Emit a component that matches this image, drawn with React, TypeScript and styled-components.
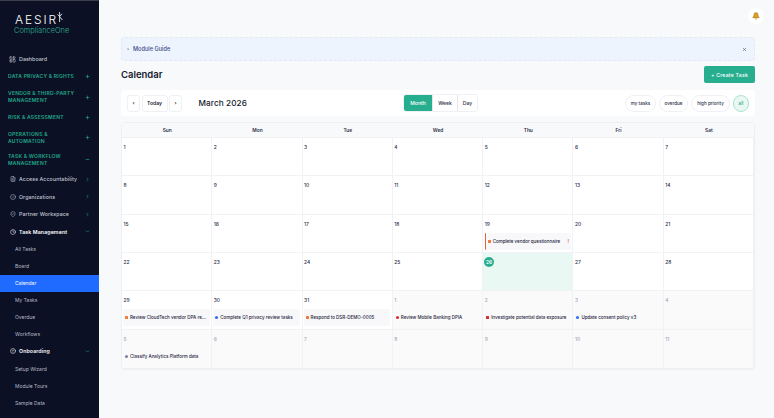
import React from "react";
import styled, { createGlobalStyle } from "styled-components";
import { LayoutDashboard, FileText, CircleCheck, ShieldCheck, Clock, CircleHelp, ChevronRight, ChevronDown, Plus, Minus, X, Bell } from "lucide-react";

const Global = createGlobalStyle`
  html, body { margin: 0; padding: 0; height: 100%; background: #f8f9fb; }
  body { font-family: Inter, "Liberation Sans", sans-serif; color: #1a1f36; overflow: hidden; }
  * { box-sizing: border-box; }
`;
const Shell = styled.div`display: flex; width: 774px; height: 418px; overflow: hidden;`;
const Sidebar = styled.nav`width: 99px; flex: none; height: 418px; overflow: hidden; background: #0b1024; border-top: 1px solid #3b3f4c; display: flex; flex-direction: column;`;
const LogoBox = styled.div`height: 49.5px; padding: 12px 0 0 15px; flex: none;`;
const LogoWord = styled.div`color: #fff; font-size: 12px; line-height: 13px; letter-spacing: 1.9px; font-weight: 300; display: flex; align-items: flex-start;`;
const LogoSub = styled.div`color: #2cb392; font-size: 7.4px; line-height: 9px; margin-left: -1px; font-weight: 300;`;
const Rune = styled.svg`width: 6px; height: 11px; margin-left: -1px; margin-top: -1px;`;
const TopItem = styled.div`height: 17px; display: flex; align-items: center; gap: 3px; padding-left: 9px; color: #c2c7d2; font-size: 5.4px; font-weight: 500; flex: none; svg { width: 7px; height: 7px; }`;
const Group = styled.div<{ $tall?: boolean }>`display: flex; align-items: center; justify-content: space-between; height: ${p => (p.$tall ? 22 : 18.5)}px; padding: 0 9px 0 8px; color: #20a98a; font-size: 5px; line-height: 7px; font-weight: 600; letter-spacing: 0.25px; flex: none; text-transform: uppercase; span { width: 70px; } svg { width: 5px; height: 5px; flex: none; stroke-width: 3; }`;
const NavItem = styled.div<{ $open?: boolean }>`height: 17.5px; display: flex; align-items: center; padding: 0 9px 0 10px; gap: 3px; color: ${p => (p.$open ? "#fff" : "#c2c7d2")}; font-size: 5.25px; font-weight: ${p => (p.$open ? 600 : 500)}; flex: none; letter-spacing: 0.1px; span { flex: 1; white-space: nowrap; }`;
const NavIcon = styled.i`display: flex; svg { width: 6px; height: 6px; }`;
const Chevron = styled.i`display: flex; color: #20a98a; svg { width: 5px; height: 5px; stroke-width: 3; }`;
const SubItem = styled.div<{ $active?: boolean }>`height: 17px; display: flex; align-items: center; padding-left: 15px; flex: none; font-size: 5px; color: ${p => (p.$active ? "#fff" : "#b4b9c6")}; background: ${p => (p.$active ? "#1f6bff" : "transparent")};`;

const Main = styled.main`flex: 1; padding: 8px 19px 0 22px; display: flex; flex-direction: column; min-width: 0;`;
const TopBar = styled.div`height: 29px; display: flex; justify-content: flex-end; flex: none;`;
const BellBtn = styled.div`width: 16px; height: 16px; margin-right: -9px; border-radius: 50%; background: #fff; display: flex; align-items: center; justify-content: center; svg { width: 8px; height: 8px; color: #a8760f; fill: #dfa021; }`;
const Guide = styled.div`height: 24px; flex: none; border: 1px dashed #e2e9f6; border-radius: 4px; background: #eef4fe; display: flex; align-items: center; padding: 0 7px 0 5px; color: #3b4a86; font-size: 5.6px; font-weight: 500; gap: 4px; span { flex: 1; } svg { width: 5px; height: 5px; color: #5b6478; stroke-width: 3; }`;
const Dot = styled.i`font-style: normal; font-size: 5px; color: #5b6aa0;`;
const TitleRow = styled.div`display: flex; justify-content: space-between; align-items: center; height: 17px; margin-top: 5px; flex: none;`;
const Title = styled.h1`margin: 0; font-size: 9.5px; font-weight: 600; color: #141a2e;`;
const CreateBtn = styled.button`width: 51px; height: 17px; border: 0; border-radius: 2px; background: #27ae8e; color: #fff; font: 500 5.2px Inter, sans-serif; letter-spacing: 0.2px; padding: 0;`;
const Toolbar = styled.div`height: 26px; margin-top: 7px; flex: none; background: #fff; border-radius: 4px; display: flex; align-items: center; justify-content: space-between; padding: 0 6px; position: relative;`;
const Nav = styled.div`display: flex; align-items: center; gap: 1.5px;`;
const Small = styled.div<{ $w: number }>`width: ${p => p.$w}px; height: 17px; border: 1px solid #eef0f4; border-radius: 3px; display: flex; align-items: center; justify-content: center; font-size: 5.1px; font-weight: 600; color: #1a1f36;`;
const Month = styled.div`font-size: 8.2px; font-weight: 500; margin-left: 15px; color: #141a2e; letter-spacing: 0.1px;`;
const Views = styled.div`position: absolute; left: 282px; top: 4px; height: 18px; display: flex; border: 1px solid #eef0f4; border-radius: 3px; overflow: hidden;`;
const ViewBtn = styled.div<{ $on?: boolean; $w: number }>`width: ${p => p.$w}px; display: flex; align-items: center; justify-content: center; font-size: 5.1px; font-weight: 500; background: ${p => (p.$on ? "#27ae8e" : "#fff")}; color: ${p => (p.$on ? "#fff" : "#2a3048")}; & + & { border-left: 1px solid #e4e6ee; }`;
const Chips = styled.div`display: flex; gap: 3px;`;
const Chip = styled.div<{ $on?: boolean; $w: number }>`width: ${p => p.$w}px; height: 17px; border-radius: 9px; border: 1px solid ${p => (p.$on ? "#a9e3d3" : "#eef0f4")}; background: ${p => (p.$on ? "#e9f8f3" : "#fff")}; color: ${p => (p.$on ? "#27ae8e" : "#2a3048")}; font-size: 4.6px; font-weight: 500; display: flex; align-items: center; justify-content: center;`;

const Cal = styled.div`margin-top: 6px; height: 247px; flex: none; border: 1px solid #eef0f3; border-radius: 4px; overflow: hidden; background: #fff; display: grid; grid-template-columns: repeat(7, 1fr); grid-template-rows: 15px repeat(6, 1fr); box-shadow: 0 1px 1px rgba(20,30,50,.04);`;
const Head = styled.div`background: #f8f9fb; border-bottom: 1px solid #eef0f3; display: flex; align-items: center; justify-content: center; font-size: 4.8px; font-weight: 600; color: #2a3048;`;
const Cell = styled.div<{ $out?: boolean; $today?: boolean; $last?: boolean }>`min-width: 0; padding: 6px 1.5px 0 1px; border-right: 1px solid #f1f2f5; border-bottom: ${p => (p.$last ? 0 : "1px solid #f1f2f5")}; background: ${p => (p.$today ? "#e9f8f3" : p.$out ? "#fafafb" : "#fff")};`;
const Num = styled.div<{ $out?: boolean }>`font-size: 4.9px; line-height: 6px; font-weight: 500; padding-left: 0.5px; color: ${p => (p.$out ? "#a4a9b5" : "#2a3048")};`;
const TodayNum = styled.div`width: 10px; height: 10px; margin-top: -2px; margin-bottom: -2px; border-radius: 50%; background: #27ae8e; color: #fff; font-size: 4.8px; font-weight: 600; display: flex; align-items: center; justify-content: center;`;
const Event = styled.div<{ $bar?: boolean; $plain?: boolean }>`height: 17px; margin-top: 6px; margin-left: ${p => (p.$bar ? 0.5 : 0)}px; background: ${p => (p.$plain ? "transparent" : "#f8f8fa")}; border-left: ${p => (p.$bar ? "1px solid #e0653a" : "0")}; border-radius: 1px; display: flex; align-items: center; gap: 2px; padding: 0 2px 0 2px; font-size: 4.5px; font-weight: 500; color: #1f2540; white-space: nowrap; overflow: hidden; span { flex: 1; min-width: 0; }`;
const Mark = styled.i<{ $c: string; $round?: boolean }>`width: 3px; height: 3px; flex: none; background: ${p => p.$c}; border-radius: ${p => (p.$round ? "50%" : "0.5px")};`;
const Flag = styled.b`color: #e0653a; font-size: 4.8px; font-weight: 600;`;

type Ev = { t: string; c: string; round?: boolean; bar?: boolean; flag?: boolean; plain?: boolean };
const events: Record<number, Ev> = {
  18: { t: "Complete vendor questionnaire", c: "#f07a3e", bar: true, flag: true },
  28: { t: "Review CloudTech vendor DPA re...", c: "#f07a3e" },
  29: { t: "Complete Q1 privacy review tasks", c: "#2f6cf5", round: true },
  30: { t: "Respond to DSR-DEMO-0005", c: "#f07a3e" },
  31: { t: "Review Mobile Banking DPIA", c: "#d92d2d", round: true, plain: true },
  32: { t: "Investigate potential data exposure", c: "#d92d2d", plain: true },
  33: { t: "Update consent policy v3", c: "#2f6cf5", round: true, plain: true },
  35: { t: "Classify Analytics Platform data", c: "#7c7fa5", round: true, plain: true },
};
const labels = [...Array.from({ length: 31 }, (_, i) => i + 1), ...Array.from({ length: 11 }, (_, i) => i + 1)];

export default function App() {
  return (
    <Shell>
      <Global />
      <Sidebar>
        <LogoBox>
          <LogoWord>AESIR<Rune viewBox="0 0 6 11"><path d="M2.6 0v10M0.6 2.4 2.6 4.6 5 1.8M2.6 4.6 5.4 8" stroke="#fff" strokeWidth="0.8" fill="none" /></Rune></LogoWord>
          <LogoSub>ComplianceOne</LogoSub>
        </LogoBox>
        <TopItem><LayoutDashboard />Dashboard</TopItem>
        <Group><span>Data Privacy &amp; Rights</span><Plus /></Group>
        <Group $tall><span>Vendor &amp; Third-Party Management</span><Plus /></Group>
        <Group><span>Risk &amp; Assessment</span><Plus /></Group>
        <Group $tall><span>Operations &amp; Automation</span><Plus /></Group>
        <Group $tall><span>Task &amp; Workflow Management</span><Minus /></Group>
        <NavItem><NavIcon><FileText /></NavIcon><span>Access Accountability</span><Chevron><ChevronRight /></Chevron></NavItem>
        <NavItem><NavIcon><CircleCheck /></NavIcon><span>Organizations</span><Chevron><ChevronRight /></Chevron></NavItem>
        <NavItem><NavIcon><ShieldCheck /></NavIcon><span>Partner Workspace</span><Chevron><ChevronRight /></Chevron></NavItem>
        <NavItem $open><NavIcon><Clock /></NavIcon><span>Task Management</span><Chevron><ChevronDown /></Chevron></NavItem>
        <SubItem>All Tasks</SubItem>
        <SubItem>Board</SubItem>
        <SubItem $active>Calendar</SubItem>
        <SubItem>My Tasks</SubItem>
        <SubItem>Overdue</SubItem>
        <SubItem>Workflows</SubItem>
        <NavItem $open><NavIcon><CircleHelp /></NavIcon><span>Onboarding</span><Chevron><ChevronDown /></Chevron></NavItem>
        <SubItem>Setup Wizard</SubItem>
        <SubItem>Module Tours</SubItem>
        <SubItem>Sample Data</SubItem>
      </Sidebar>
      <Main>
        <TopBar><BellBtn><Bell /></BellBtn></TopBar>
        <Guide><Dot>›</Dot><span>Module Guide</span><X /></Guide>
        <TitleRow><Title>Calendar</Title><CreateBtn>+ Create Task</CreateBtn></TitleRow>
        <Toolbar>
          <Nav>
            <Small $w={13}>‹</Small><Small $w={26}>Today</Small><Small $w={13}>›</Small>
            <Month>March 2026</Month>
          </Nav>
          <Views>
            <ViewBtn $on $w={28}>Month</ViewBtn><ViewBtn $w={25}>Week</ViewBtn><ViewBtn $w={20}>Day</ViewBtn>
          </Views>
          <Chips>
            <Chip $w={31}>my tasks</Chip><Chip $w={29}>overdue</Chip><Chip $w={39}>high priority</Chip><Chip $on $w={16}>all</Chip>
          </Chips>
        </Toolbar>
        <Cal>
          {["Sun", "Mon", "Tue", "Wed", "Thu", "Fri", "Sat"].map(d => <Head key={d}>{d}</Head>)}
          {labels.map((n, i) => {
            const out = i >= 31;
            const e = events[i];
            return (
              <Cell key={i} $out={out} $today={i === 25} $last={i >= 35}>
                {i === 25 ? <TodayNum>{n}</TodayNum> : <Num $out={out}>{n}</Num>}
                {e && (
                  <Event $bar={e.bar} $plain={e.plain}>
                    <Mark $c={e.c} $round={e.round} /><span>{e.t}</span>{e.flag && <Flag>!</Flag>}
                  </Event>
                )}
              </Cell>
            );
          })}
        </Cal>
      </Main>
    </Shell>
  );
}
